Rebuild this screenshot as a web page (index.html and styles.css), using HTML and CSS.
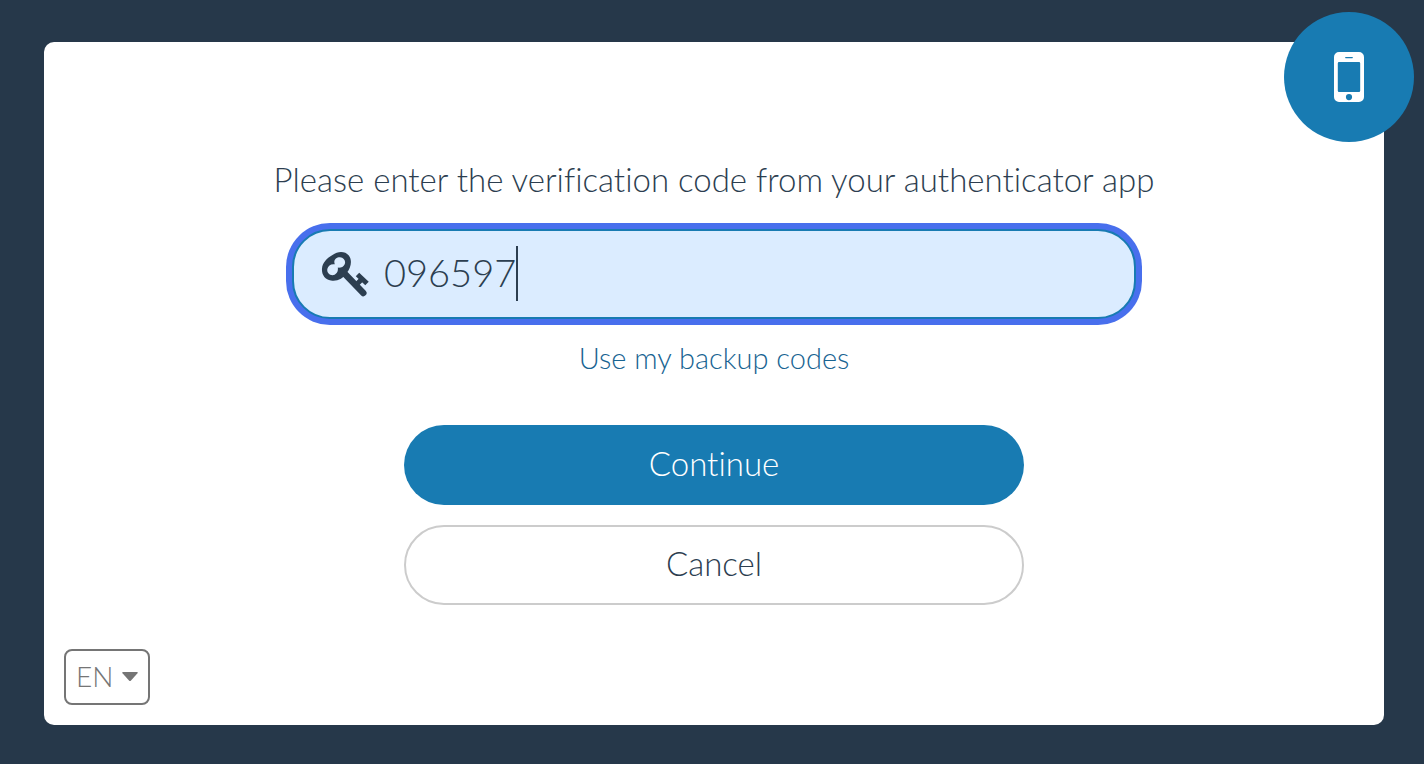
FILE: index.html
```html
<!DOCTYPE html>
<html lang="en">
<head>
<meta charset="utf-8">
<meta name="viewport" content="width=device-width, initial-scale=1">
<title>Verification code</title>
<link rel="stylesheet" href="styles.css">
</head>
<body>
<main class="card">
  <div class="badge">
    <svg class="badge-icon" viewBox="0 0 30 50" aria-hidden="true">
      <path fill="#fff" fill-rule="evenodd" d="M5 0H25A5 5 0 0 1 30 5V45A5 5 0 0 1 25 50H5A5 5 0 0 1 0 45V5A5 5 0 0 1 5 0ZM5 10A1.2 1.2 0 0 0 3.8 11.2V38.8A1.2 1.2 0 0 0 5 40H25A1.2 1.2 0 0 0 26.2 38.8V11.2A1.2 1.2 0 0 0 25 10ZM11.7 5A.6.6 0 0 0 11.7 6.2H18.3A.6.6 0 0 0 18.3 5ZM15 42A3.1 3.1 0 1 0 15 48.200A3.1 3.1 0 1 0 15 42Z"/>
    </svg>
  </div>
  <form class="form">
    <label class="prompt" for="code">Please enter the verification code from your authenticator app</label>
    <div class="field">
      <svg class="key-icon" viewBox="0 0 70 70" aria-hidden="true">
        <path fill="none" stroke="currentColor" stroke-width="6.500" stroke-linecap="round" d="M34 34L53.300 54"/>
        <path fill="none" stroke="currentColor" stroke-width="5" stroke-linejoin="round" d="M47.500 35.500L57 44.500M52 40L46 46"/>
        <path fill="currentColor" fill-rule="evenodd" d="M22.500 16C28 12 35 12 38.800 16.500C42.500 21 41 28.500 37 33.500C33 40 27 42.500 21 41.500C15 40.500 11.500 35.500 12 29.500C12.500 23.500 17 19 22.500 16ZM24.800 25.300C23 21 26.500 18 30 18.200C34 18.500 36 22 34.700 25.200C33.500 28 31 28.800 27.800 28.600C28.500 32.800 26 36 22.500 36.200C18.800 36.200 16.600 33 17.400 29.700C18.200 26.500 21 24.700 24.800 25.300Z"/>
      </svg>
      <input class="code-input" id="code" type="text" inputmode="numeric" autocomplete="one-time-code" value="096597">
      <span class="caret" aria-hidden="true"></span>
    </div>
    <a class="backup-link" href="#">Use my backup codes</a>
    <div class="actions">
      <button class="button button-primary" type="submit">Continue</button>
      <button class="button button-secondary" type="button">Cancel</button>
    </div>
  </form>
  <div class="language">
    <select class="language-select" aria-label="Language">
      <option selected>EN</option>
    </select>
    <svg class="language-arrow" viewBox="0 0 16 10" aria-hidden="true"><path fill="currentColor" d="M1 0H15Q16.500 0 15.500 1.300L9 8.500Q8 9.500 7 8.500L.5 1.300Q-.5 0 1 0Z"/></svg>
  </div>
</main>
</body>
</html>
```
FILE: styles.css
```css
* {
  box-sizing: border-box;
}

body {
  display: flex;
  min-height: 100vh;
  margin: 0;
  padding: 42px 40px 39px 44px;
  background: #26384a;
  color: #2c3e50;
  font-family: Lato, "Open Sans", sans-serif;
  font-variant-ligatures: none;
  font-weight: 300;
}

.card {
  position: relative;
  display: flex;
  flex: 1;
  flex-direction: column;
  justify-content: space-between;
  padding: 117px 20px 20px;
  border-radius: 10px;
  background: #fff;
}

.badge {
  position: absolute;
  top: -30px;
  right: -30px;
  display: grid;
  place-items: center;
  width: 130px;
  height: 130px;
  border-radius: 50%;
  background: #187bb2;
}

.badge-icon {
  width: 30px;
  height: 50px;
}

.form {
  display: flex;
  flex-direction: column;
  align-items: center;
}

.prompt {
  font-size: 33px;
  line-height: 40px;
  text-align: center;
}

.field {
  position: relative;
  display: flex;
  align-items: center;
  width: 100%;
  max-width: 844px;
  height: 90px;
  margin-top: 30px;
  padding: 0 16px;
  border: 2px solid #187bb2;
  border-radius: 38px;
  background: #dbecff;
  box-shadow: 0 0 0 6px #486fed;
}

.key-icon {
  flex: none;
  width: 70px;
  height: 70px;
}

.code-input {
  flex: 1;
  min-width: 0;
  padding: 0 0 4px 4px;
  border: 0;
  outline: 0;
  background: transparent;
  color: inherit;
  font: inherit;
  font-size: 38px;
  line-height: 52px;
}

.caret {
  position: absolute;
  top: 15px;
  left: 222px;
  width: 2px;
  height: 55px;
  background: #2c3e50;
}

.backup-link {
  margin-top: 21px;
  color: #186492;
  font-size: 29px;
  line-height: 36px;
  text-decoration: none;
}

.actions {
  display: grid;
  gap: 20px;
  width: 100%;
  max-width: 620px;
  margin-top: 49px;
}

.button {
  height: 80px;
  padding: 0 0 4px;
  border: 0;
  border-radius: 40px;
  font: inherit;
  font-size: 33px;
}

.button-primary {
  background: #187bb2;
  color: #fff;
}

.button-secondary {
  border: 2px solid #ccc;
  background: #fff;
  color: #2c3e50;
}

.language {
  position: relative;
  align-self: flex-start;
  color: #757575;
}

.language-select {
  display: block;
  width: 86px;
  height: 56px;
  padding: 0 10px 2px;
  border: 2px solid #757575;
  border-radius: 8px;
  appearance: none;
  background: #fff;
  color: inherit;
  font: inherit;
  font-size: 28px;
}

.language-arrow {
  position: absolute;
  top: 23px;
  right: 12px;
  width: 16px;
  height: 10px;
  pointer-events: none;
}
```
